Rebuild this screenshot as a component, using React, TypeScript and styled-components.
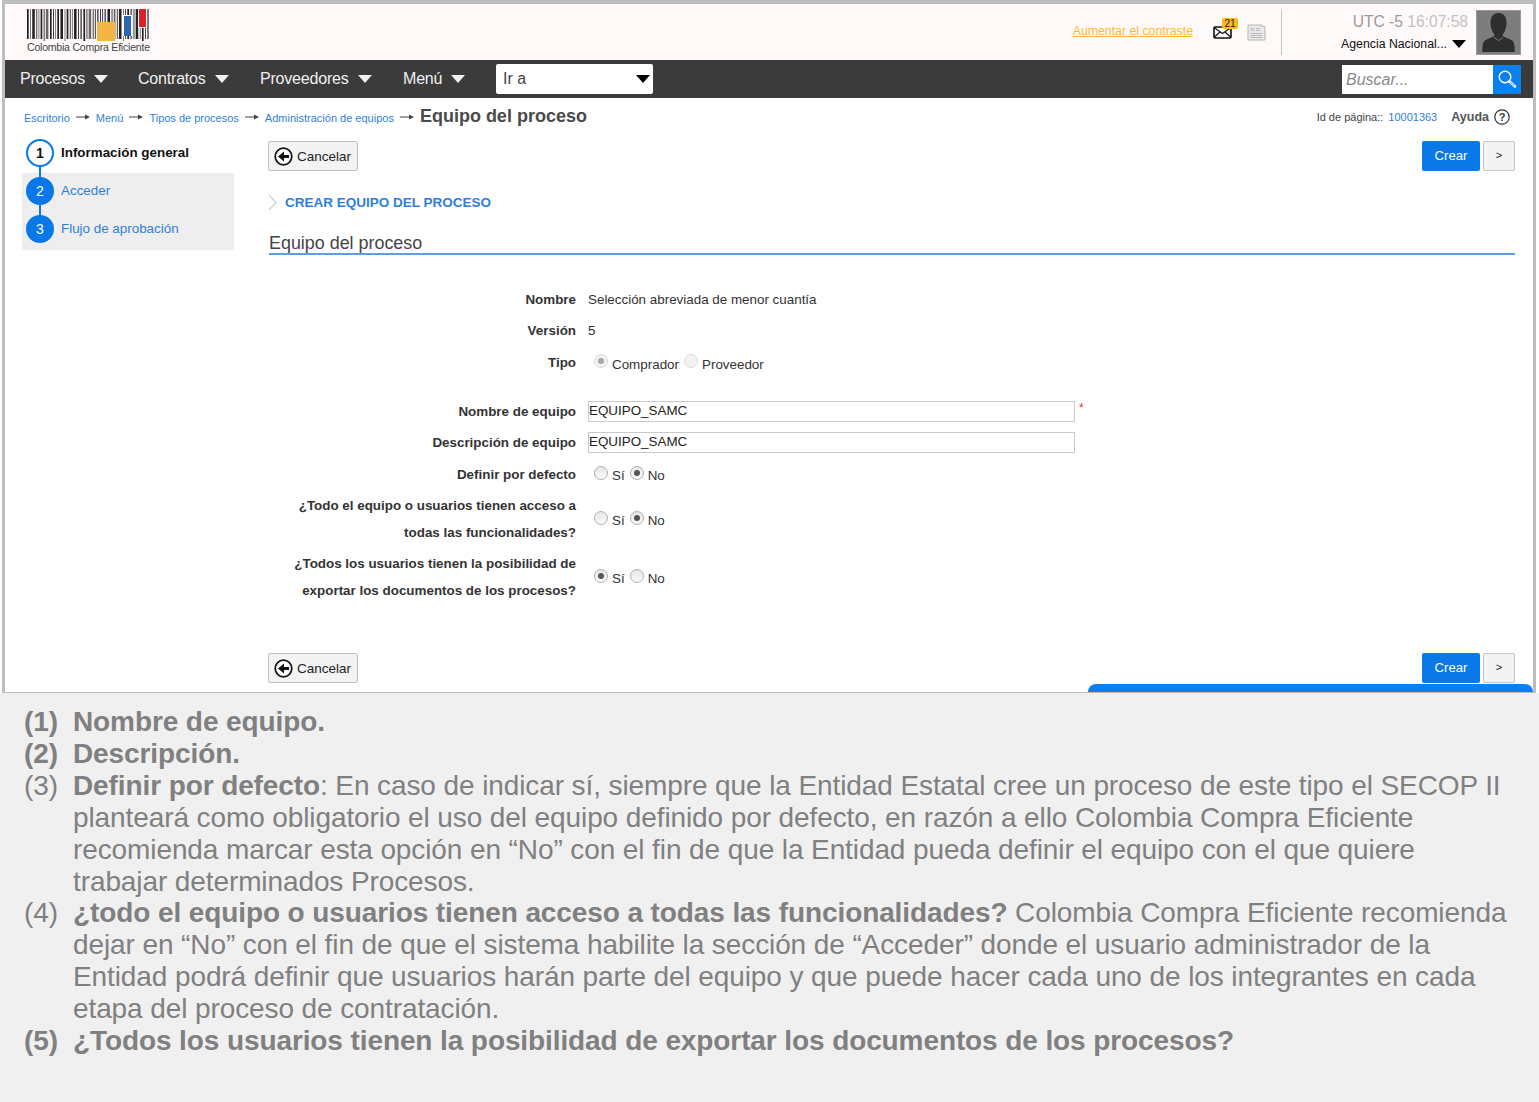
import React from "react";
import styled, { createGlobalStyle } from "styled-components";

const GlobalStyle = createGlobalStyle`
  html, body {
    margin: 0;
    padding: 0;
    background: #f0f0f0;
    font-family: "Liberation Sans", Arial, sans-serif;
  }
`;

const Page = styled.div`
  width: 1539px;
  height: 1102px;
  overflow: hidden;
  background: #f0f0f0;
`;

const ScreenEdge = styled.div`
  background: #fff;
  padding: 0 3px 0 2px;
`;

const Screen = styled.div`
  position: relative;
  box-sizing: border-box;
  height: 693px;
  padding-top: 1px;
  background: #fff;
  border-left: 3px solid #bdbdbd;
  border-right: 3px solid #bdbdbd;
  border-top: 4px solid #bdbdbd;
  border-bottom: 1px solid #bdbdbd;
  overflow: hidden;
`;

const TopBar = styled.header`
  display: flex;
  align-items: flex-start;
  height: 55px;
  background: #fff9f9;
  padding-left: 22px;
`;

const LogoBlock = styled.div`
  width: 126px;
  padding-top: 4px;
`;

const LogoText = styled.div`
  font-size: 10.5px;
  letter-spacing: -0.2px;
  color: #444;
  line-height: 12px;
`;

const TopRight = styled.div`
  margin-left: auto;
  display: flex;
  align-items: flex-start;
  padding-right: 12px;
`;

const Contrast = styled.a`
  font-size: 12.3px;
  color: #fdb92e;
  text-decoration: underline;
  margin-top: 19px;
  margin-right: 20px;
`;

const MailBox = styled.div`
  position: relative;
  width: 19px;
  height: 16px;
  margin-top: 19px;
  margin-right: 15px;
`;

const MailBadge = styled.span`
  position: absolute;
  top: -6px;
  left: 9px;
  width: 16px;
  height: 11px;
  background: #fdb913;
  border-radius: 2px;
  font-size: 10px;
  line-height: 11px;
  text-align: center;
  color: #222;
`;

const NewsBox = styled.div`
  width: 19px;
  height: 17px;
  margin-top: 19px;
  margin-right: 15px;
`;

const Divider = styled.div`
  width: 1px;
  height: 45px;
  margin-top: 5px;
  background: #c4c4c4;
`;

const UserInfo = styled.div`
  width: 194px;
  text-align: right;
  padding-right: 8px;
  box-sizing: border-box;
`;

const Clock = styled.div`
  font-size: 15.6px;
  line-height: 18px;
  margin-top: 8px;
  color: #999;
`;

const ClockTime = styled.span`
  color: #c2c2c2;
`;

const AgencyRow = styled.div`
  display: flex;
  justify-content: flex-end;
  align-items: center;
  gap: 5px;
  margin-top: 6px;
  margin-right: 2px;
  font-size: 12.3px;
  line-height: 14px;
  color: #111;
`;

const Caret = styled.span<{ $color?: string; $w?: number }>`
  display: inline-block;
  width: 0;
  height: 0;
  border-left: ${(p) => p.$w ?? 7}px solid transparent;
  border-right: ${(p) => p.$w ?? 7}px solid transparent;
  border-top: ${(p) => (p.$w ?? 7) + 1}px solid ${(p) => p.$color ?? "#000"};
`;

const Avatar = styled.div`
  width: 45px;
  height: 45px;
  margin-top: 5px;
  background: #7d7d7d;
  border: 1px solid #999;
  box-sizing: border-box;
`;

const NavBar = styled.nav`
  display: flex;
  align-items: center;
  height: 38px;
  background: #3b3b3b;
  padding-left: 15px;
  padding-right: 12px;
`;

const NavItem = styled.div<{ $w: number }>`
  display: flex;
  align-items: center;
  gap: 9px;
  width: ${(p) => p.$w}px;
  font-size: 16px;
  letter-spacing: -0.2px;
  color: #f0f0f0;
`;

const NavSelect = styled.div`
  box-sizing: border-box;
  display: flex;
  align-items: center;
  justify-content: space-between;
  width: 157px;
  height: 30px;
  margin-left: 1px;
  padding: 0 3px 0 7px;
  background: #fff;
  border-radius: 2px;
  font-size: 16px;
  color: #444;
`;

const SearchBox = styled.div`
  margin-left: auto;
  display: flex;
  height: 29px;
`;

const SearchField = styled.div`
  box-sizing: border-box;
  width: 151px;
  padding-left: 4px;
  background: #fff;
  font-size: 16px;
  font-style: italic;
  line-height: 29px;
  color: #8a8a8a;
`;

const SearchButton = styled.div`
  display: flex;
  align-items: center;
  justify-content: center;
  width: 28px;
  background: #0a7fee;
`;

const Crumbs = styled.div`
  box-sizing: border-box;
  display: flex;
  align-items: center;
  height: 40px;
  padding: 0 23px 0 19px;
  font-size: 11px;
  color: #2f7fd8;
`;

const CrumbArrow = styled.span`
  display: inline-block;
  width: 14px;
  margin: 0 6px 2px 6px;
  line-height: 0;
`;

const CrumbTitle = styled.span`
  font-size: 18px;
  font-weight: bold;
  color: #4a4a4a;
  margin-bottom: 3px;
`;

const PageMeta = styled.div`
  margin-left: auto;
  display: flex;
  align-items: center;
  font-size: 11px;
  color: #444;
  margin-bottom: 2px;
`;

const PageId = styled.span`
  color: #2f7fd8;
  margin-left: 5px;
  margin-right: 14px;
  font-size: 11px;
`;

const HelpLabel = styled.span`
  font-size: 12.5px;
  font-weight: bold;
  color: #555;
  margin-right: 5px;
`;

const Body = styled.div`
  display: flex;
  align-items: flex-start;
  margin-top: -3px;
`;

const Steps = styled.aside`
  width: 212px;
  margin-left: 17px;
  margin-right: 34px;
`;

const Step = styled.div<{ $muted?: boolean }>`
  position: relative;
  display: flex;
  align-items: center;
  height: 38px;
  padding-left: 39px;
  font-size: 13.4px;
  background: ${(p) => (p.$muted ? "#eeeeee" : "transparent")};
  color: ${(p) => (p.$muted ? "#2f7fd8" : "#111")};
  font-weight: ${(p) => (p.$muted ? "normal" : "bold")};
  span { margin-top: -4px; }
  &:last-child { height: 39px; }
`;

const StepCircle = styled.div<{ $active?: boolean }>`
  position: absolute;
  z-index: 2;
  left: 4px;
  top: 4px;
  box-sizing: border-box;
  width: 28px;
  height: 28px;
  border-radius: 50%;
  border: 2px solid #0a78e6;
  background: ${(p) => (p.$active ? "#fff" : "#0a78e6")};
  color: ${(p) => (p.$active ? "#111" : "#fff")};
  font-size: 14px;
  font-weight: ${(p) => (p.$active ? "bold" : "normal")};
  line-height: 24px;
  text-align: center;
`;

const StepLink = styled.div`
  position: absolute;
  z-index: 1;
  left: 17px;
  top: 29px;
  width: 2px;
  height: 14px;
  background: #0a78e6;
`;

const Main = styled.main`
  width: 1247px;
  margin-top: 6px;
`;

const ActionRow = styled.div`
  display: flex;
  justify-content: space-between;
  height: 30px;
`;

const ActionGroup = styled.div`
  display: flex;
  gap: 3px;
`;

const CancelButton = styled.div`
  box-sizing: border-box;
  display: flex;
  align-items: center;
  gap: 4px;
  width: 90px;
  height: 30px;
  padding-left: 5px;
  background: #f3f3f3;
  border: 1px solid #bdbdbd;
  border-radius: 2px;
  font-size: 13.5px;
  color: #222;
`;

const CreateButton = styled.div`
  width: 58px;
  height: 30px;
  background: #0a78e6;
  border-radius: 2px;
  color: #fff;
  font-size: 13.2px;
  line-height: 30px;
  text-align: center;
`;

const NextButton = styled.div`
  box-sizing: border-box;
  width: 32px;
  height: 30px;
  background: #f3f3f3;
  border: 1px solid #c4c4c4;
  border-radius: 2px;
  font-size: 11px;
  line-height: 26px;
  text-align: center;
  color: #222;
`;

const SectionTitle = styled.div`
  display: flex;
  align-items: center;
  gap: 8px;
  height: 20px;
  margin-top: 21px;
  font-size: 13.5px;
  font-weight: bold;
  color: #2f7fd8;
`;

const SubTitle = styled.div`
  margin-top: 20px;
  height: 21px;
  border-bottom: 2px solid #5b9fe3;
  margin-left: 1px;
  font-size: 17.9px;
  line-height: 23px;
  color: #444;
`;

const Form = styled.div`
  margin-top: 28px;
  margin-bottom: 47px;
`;

const FormRow = styled.div<{ $h: number }>`
  display: grid;
  grid-template-columns: 308px 1fr;
  column-gap: 12px;
  align-items: center;
  height: ${(p) => p.$h}px;
`;

const Label = styled.div`
  font-size: 13.4px;
  font-weight: bold;
  line-height: 27px;
  color: #333;
  text-align: right;
  white-space: nowrap;
`;

const Value = styled.div`
  font-size: 13.4px;
  color: #333;
`;

const TextBox = styled.div`
  box-sizing: border-box;
  width: 487px;
  height: 21px;
  padding-left: 0;
  border: 1px solid #c9c9c9;
  background: #fff;
  font-size: 13.4px;
  line-height: 18px;
  color: #222;
`;

const InputWrap = styled.div`
  display: flex;
  align-items: flex-start;
  gap: 4px;
`;

const Required = styled.span`
  color: #d33;
  font-size: 12px;
`;

const RadioGroup = styled.div`
  display: flex;
  align-items: center;
  padding-left: 6px;
  font-size: 13.4px;
  color: #333;
`;

const RadioText = styled.span`
  margin-left: 4px;
  margin-right: 5px;
  margin-top: 3px;
`;

const RadioDot = styled.span<{ $checked?: boolean; $disabled?: boolean }>`
  position: relative;
  box-sizing: border-box;
  display: inline-block;
  width: 14px;
  height: 14px;
  border-radius: 50%;
  border: 1px solid ${(p) => (p.$disabled ? "#dcdcdc" : "#b0b0b0")};
  background: ${(p) => (p.$disabled ? "#f2f2f2" : "linear-gradient(#e6e6e6, #fafafa)")};
  margin-top: -3px;
  &::after {
    content: "";
    display: ${(p) => (p.$checked ? "block" : "none")};
    position: absolute;
    left: 3px;
    top: 3px;
    width: 6px;
    height: 6px;
    border-radius: 50%;
    background: ${(p) => (p.$disabled ? "#a8a8a8" : "#555")};
  }
`;

const ChatTab = styled.div`
  position: absolute;
  right: 0;
  bottom: 0;
  width: 445px;
  height: 8px;
  background: #0a7fee;
  border-radius: 14px 14px 0 0;
`;

const Notes = styled.section`
  padding: 13px 0 0 24px;
  width: 1488px;
  font-size: 28px;
  line-height: 31.9px;
  letter-spacing: -0.1px;
  color: #808080;
`;

const Note = styled.div`
  display: grid;
  grid-template-columns: 49px 1fr;
`;

const NoteNum = styled.span<{ $bold?: boolean }>`
  font-weight: ${(p) => (p.$bold ? "bold" : "normal")};
`;

const Barcode = () => {
  const bars = [2, 1, 3, 1, 1, 2, 1, 3, 2, 1, 1, 2, 3, 1, 2, 1, 1, 3, 1, 2, 2, 1, 3, 1, 1, 2, 1, 1, 2, 3, 1, 2, 1, 3, 1, 1, 2, 2, 1, 3, 1, 2, 1, 2];
  let x = 0;
  return (
    <svg width="123" height="32" viewBox="0 0 123 32" style={{ display: "block" }}>
      {bars.map((w, i) => {
        const cur = x;
        x += w + 1.12;
        return <rect key={i} x={cur} y={0} width={w * 0.85} height={i % 7 === 6 ? 32 : 30} fill={i % 3 === 1 ? "#666" : "#222"} />;
      })}
      <rect x="70" y="13" width="18" height="19" fill="#f3b544" />
      <rect x="96" y="6" width="9" height="21" fill="#fff" />
      <rect x="97" y="7" width="7" height="20" fill="#2a66ad" />
      <rect x="111" y="0" width="9" height="19" fill="#fff" />
      <rect x="112" y="0" width="7" height="18" fill="#e01f2d" />
    </svg>
  );
};

const MailIcon = () => (
  <svg width="19" height="13" viewBox="0 0 19 13" style={{ marginTop: 2, display: "block" }}>
    <rect x="1" y="1" width="17" height="11" rx="1" fill="#fff" stroke="#111" strokeWidth="1.6" />
    <path d="M1 1.5 9.5 7.5 18 1.5M1 11.5l6-5.500M18 11.5l-6-5.500" fill="none" stroke="#111" strokeWidth="1.2" />
  </svg>
);

const NewsIcon = () => (
  <svg width="19" height="17" viewBox="0 0 19 17" style={{ display: "block" }}>
    <path d="M1 1h14v1.500h3V16H1z" fill="#e9e9e9" stroke="#b5b5b5" strokeWidth="1" />
    <path d="M3.5 4h4v3h-4z" fill="#ccc" />
    <path d="M9 4.500h4M9 6.500h4M3.500 9.500h12M3.500 11.500h12M3.500 13.500h12" stroke="#bbb" strokeWidth="1" />
  </svg>
);

const PersonIcon = () => (
  <svg width="43" height="43" viewBox="0 0 43 43" style={{ display: "block" }}>
    <path d="M21.500 2c-4.500 0-8 3-8 9.500 0 5 1.800 9.500 3.800 12v1.500c-3 2-8 3-10 5-1.500 1.500-2 6-2 11h32.500c0-5-.5-9.500-2-11-2-2-7-3-10-5v-1.500c2-2.500 3.800-7 3.800-12C29.500 5 26 2 21.500 2z" fill="#2e2e2e" />
    <path d="M17 26.500l4.500 3 4.500-3" fill="none" stroke="#8c8c8c" strokeWidth="0.800" />
  </svg>
);

const SearchIcon = () => (
  <svg width="20" height="20" viewBox="0 0 20 20">
    <circle cx="8" cy="8" r="5.800" fill="none" stroke="#fff" strokeWidth="1.400" />
    <path d="M12.500 12.500l5.500 5" stroke="#fff" strokeWidth="2.600" strokeLinecap="round" />
    <path d="M13 13l4.500 4" stroke="#0a7fee" strokeWidth="0.800" />
  </svg>
);

const CrumbArrowIcon = () => (
  <CrumbArrow>
    <svg width="14" height="6" viewBox="0 0 14 6">
      <path d="M0 3h10" stroke="#444" strokeWidth="1" />
      <path d="M9 0.500 14 3 9 5.500z" fill="#444" />
    </svg>
  </CrumbArrow>
);

const BackIcon = () => (
  <svg width="19" height="19" viewBox="0 0 19 19">
    <circle cx="9.500" cy="9.500" r="8.300" fill="#fff" stroke="#111" strokeWidth="1.700" />
    <path d="M15 8h-5V4.500L4 9.500l6 5V11h5z" fill="#111" />
  </svg>
);

const HelpIcon = () => (
  <svg width="16" height="16" viewBox="0 0 16 16">
    <circle cx="8" cy="8" r="7.200" fill="#fff" stroke="#333" strokeWidth="1.200" />
    <text x="8" y="12" textAnchor="middle" fontSize="11" fontWeight="bold" fontFamily="Liberation Sans" fill="#333">?</text>
  </svg>
);

const Chevron = () => (
  <svg width="9" height="17" viewBox="0 0 9 17">
    <path d="M1 1l7 7.500-7 7.500" fill="none" stroke="#cfcfcf" strokeWidth="1.200" />
  </svg>
);

const Actions = () => (
  <ActionRow>
    <CancelButton>
      <BackIcon />
      Cancelar
    </CancelButton>
    <ActionGroup>
      <CreateButton>Crear</CreateButton>
      <NextButton>&gt;</NextButton>
    </ActionGroup>
  </ActionRow>
);

const Radio = ({ text, checked, disabled }: { text: string; checked?: boolean; disabled?: boolean }) => (
  <>
    <RadioDot $checked={checked} $disabled={disabled} />
    <RadioText>{text}</RadioText>
  </>
);

const YesNo = ({ yes }: { yes?: boolean }) => (
  <RadioGroup>
    <Radio text="Sí" checked={yes} />
    <Radio text="No" checked={!yes} />
  </RadioGroup>
);

const NAV = [
  { label: "Procesos", w: 118 },
  { label: "Contratos", w: 122 },
  { label: "Proveedores", w: 143 },
  { label: "Menú", w: 92 },
];

export default function App() {
  return (
    <Page>
      <GlobalStyle />
      <ScreenEdge>
        <Screen>
          <TopBar>
            <LogoBlock>
              <Barcode />
              <LogoText>Colombia Compra Eficiente</LogoText>
            </LogoBlock>
            <TopRight>
              <Contrast>Aumentar el contraste</Contrast>
              <MailBox>
                <MailIcon />
                <MailBadge>21</MailBadge>
              </MailBox>
              <NewsBox>
                <NewsIcon />
              </NewsBox>
              <Divider />
              <UserInfo>
                <Clock>
                  UTC -5 <ClockTime>16:07:58</ClockTime>
                </Clock>
                <AgencyRow>
                  Agencia Nacional...
                  <Caret />
                </AgencyRow>
              </UserInfo>
              <Avatar>
                <PersonIcon />
              </Avatar>
            </TopRight>
          </TopBar>
          <NavBar>
            {NAV.map((n) => (
              <NavItem key={n.label} $w={n.w}>
                {n.label}
                <Caret $color="#f0f0f0" />
              </NavItem>
            ))}
            <NavSelect>
              Ir a
              <Caret />
            </NavSelect>
            <SearchBox>
              <SearchField>Buscar...</SearchField>
              <SearchButton>
                <SearchIcon />
              </SearchButton>
            </SearchBox>
          </NavBar>
          <Crumbs>
            Escritorio
            <CrumbArrowIcon />
            Menú
            <CrumbArrowIcon />
            Tipos de procesos
            <CrumbArrowIcon />
            Administración de equipos
            <CrumbArrowIcon />
            <CrumbTitle>Equipo del proceso</CrumbTitle>
            <PageMeta>
              Id de página::
              <PageId>10001363</PageId>
              <HelpLabel>Ayuda</HelpLabel>
              <HelpIcon />
            </PageMeta>
          </Crumbs>
          <Body>
            <Steps>
              <Step>
                <StepCircle $active>1</StepCircle>
                <StepLink />
                <span>Información general</span>
              </Step>
              <Step $muted>
                <StepCircle>2</StepCircle>
                <StepLink />
                <span>Acceder</span>
              </Step>
              <Step $muted>
                <StepCircle>3</StepCircle>
                <span>Flujo de aprobación</span>
              </Step>
            </Steps>
            <Main>
              <Actions />
              <SectionTitle>
                <Chevron />
                CREAR EQUIPO DEL PROCESO
              </SectionTitle>
              <SubTitle>Equipo del proceso</SubTitle>
              <Form>
                <FormRow $h={32}>
                  <Label>Nombre</Label>
                  <Value>Selección abreviada de menor cuantía</Value>
                </FormRow>
                <FormRow $h={31}>
                  <Label>Versión</Label>
                  <Value>5</Value>
                </FormRow>
                <FormRow $h={33}>
                  <Label>Tipo</Label>
                  <RadioGroup>
                    <Radio text="Comprador" checked disabled />
                    <Radio text="Proveedor" disabled />
                  </RadioGroup>
                </FormRow>
                <FormRow $h={17} />
                <FormRow $h={31}>
                  <Label>Nombre de equipo</Label>
                  <InputWrap>
                    <TextBox>EQUIPO_SAMC</TextBox>
                    <Required>*</Required>
                  </InputWrap>
                </FormRow>
                <FormRow $h={31}>
                  <Label>Descripción de equipo</Label>
                  <TextBox>EQUIPO_SAMC</TextBox>
                </FormRow>
                <FormRow $h={32}>
                  <Label>Definir por defecto</Label>
                  <YesNo />
                </FormRow>
                <FormRow $h={58}>
                  <Label>
                    ¿Todo el equipo o usuarios tienen acceso a
                    <br />
                    todas las funcionalidades?
                  </Label>
                  <YesNo />
                </FormRow>
                <FormRow $h={58}>
                  <Label>
                    ¿Todos los usuarios tienen la posibilidad de
                    <br />
                    exportar los documentos de los procesos?
                  </Label>
                  <YesNo yes />
                </FormRow>
              </Form>
              <Actions />
            </Main>
          </Body>
          <ChatTab />
        </Screen>
      </ScreenEdge>
      <Notes>
        <Note>
          <NoteNum $bold>(1)</NoteNum>
          <b>Nombre de equipo.</b>
        </Note>
        <Note>
          <NoteNum $bold>(2)</NoteNum>
          <b>Descripción.</b>
        </Note>
        <Note>
          <NoteNum>(3)</NoteNum>
          <div>
            <b>Definir por defecto</b>: En caso de indicar sí, siempre que la Entidad Estatal cree un proceso de este
            tipo el SECOP II planteará como obligatorio el uso del equipo definido por defecto, en razón a ello Colombia
            Compra Eficiente recomienda marcar esta opción en “No” con el fin de que la Entidad pueda definir el equipo
            con el que quiere trabajar determinados Procesos.
          </div>
        </Note>
        <Note>
          <NoteNum>(4)</NoteNum>
          <div>
            <b>¿todo el equipo o usuarios tienen acceso a todas las funcionalidades?</b> Colombia Compra Eficiente
            recomienda dejar en “No” con el fin de que el sistema habilite la sección de “Acceder” donde el usuario
            administrador de la Entidad podrá definir que usuarios harán parte del equipo y que puede hacer cada uno de
            los integrantes en cada etapa del proceso de contratación.
          </div>
        </Note>
        <Note>
          <NoteNum $bold>(5)</NoteNum>
          <b>¿Todos los usuarios tienen la posibilidad de exportar los documentos de los procesos?</b>
        </Note>
      </Notes>
    </Page>
  );
}
